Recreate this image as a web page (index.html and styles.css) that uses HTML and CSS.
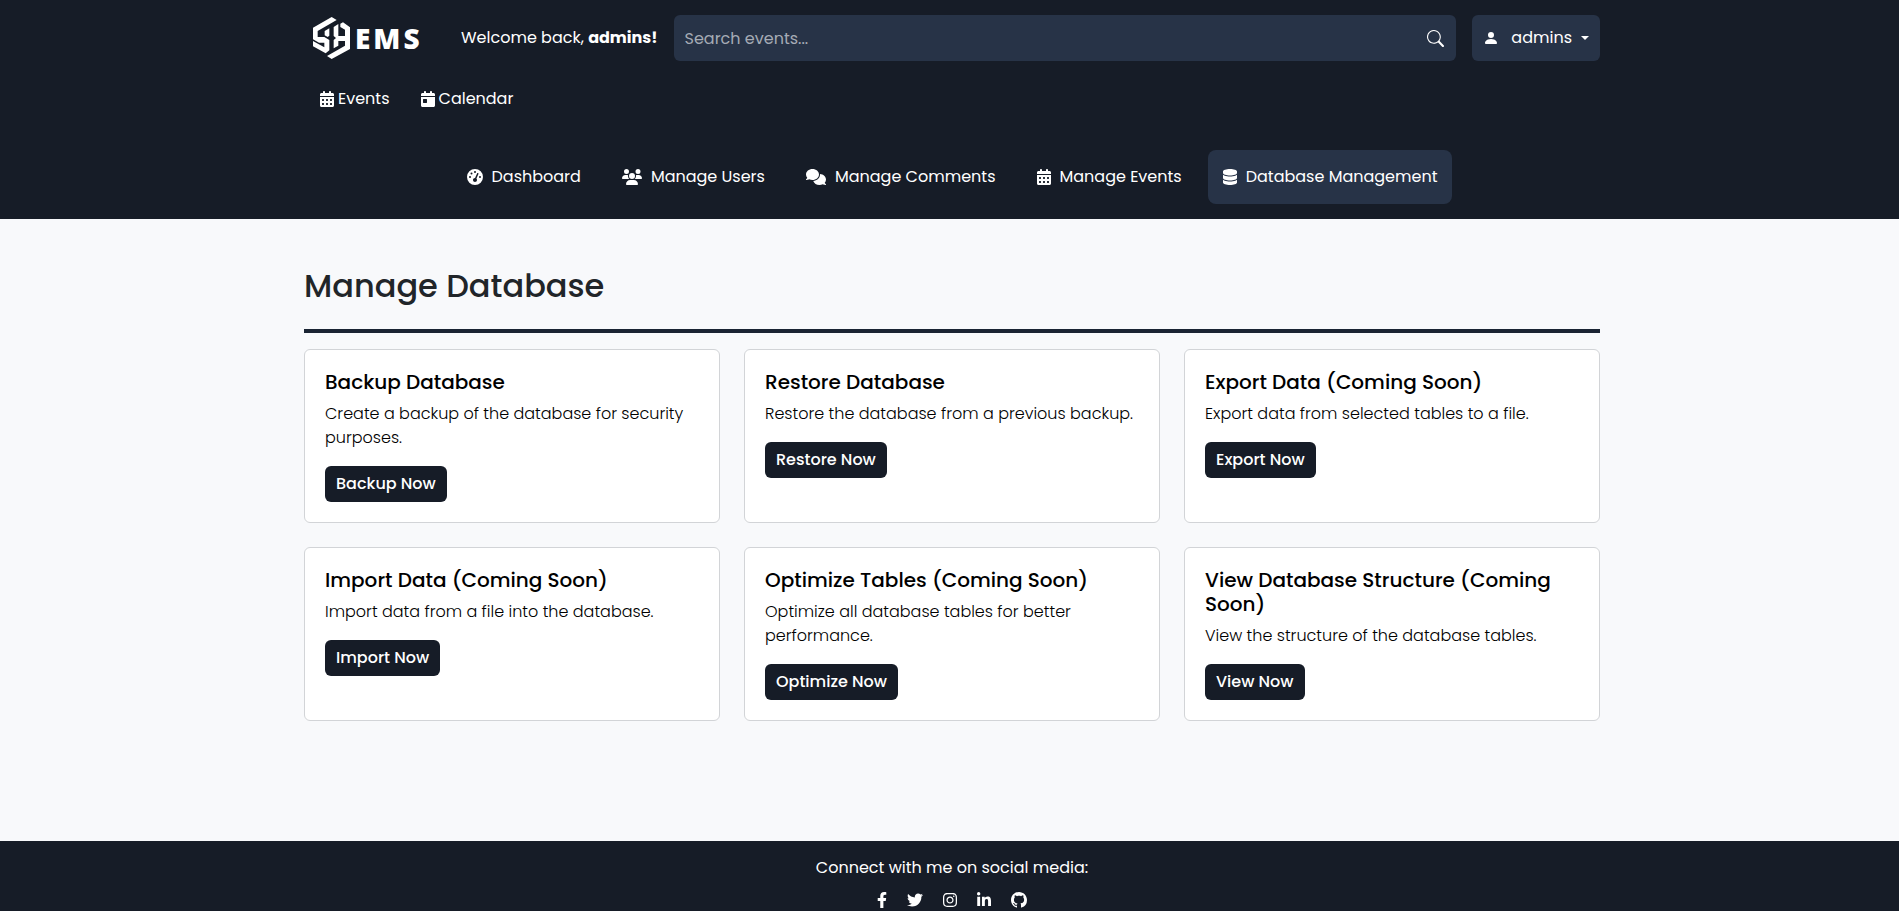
FILE: index.html
```html
<!DOCTYPE html>
<html lang="en">
<head>
<meta charset="utf-8">
<meta name="viewport" content="width=device-width, initial-scale=1">
<title>Manage Database</title>
<link rel="stylesheet" href="styles.css">
</head>
<body>
<svg class="sprite" aria-hidden="true">
  <symbol id="calendar-days" viewBox="0 0 448 512"><path d="M128 0c17.700 0 32 14.300 32 32V64H288V32c0-17.700 14.300-32 32-32s32 14.300 32 32V64h48c26.500 0 48 21.500 48 48v48H0V112C0 85.500 21.500 64 48 64H96V32c0-17.700 14.300-32 32-32zM0 192H448V464c0 26.500-21.500 48-48 48H48c-26.500 0-48-21.500-48-48V192zm64 80v32c0 8.800 7.200 16 16 16h32c8.800 0 16-7.200 16-16V272c0-8.800-7.200-16-16-16H80c-8.800 0-16 7.200-16 16zm128 0v32c0 8.800 7.200 16 16 16h32c8.800 0 16-7.200 16-16V272c0-8.800-7.200-16-16-16H208c-8.800 0-16 7.200-16 16zm144-16c-8.800 0-16 7.200-16 16v32c0 8.800 7.200 16 16 16h32c8.800 0 16-7.200 16-16V272c0-8.800-7.200-16-16-16H336zM64 400v32c0 8.800 7.200 16 16 16h32c8.800 0 16-7.200 16-16V400c0-8.800-7.200-16-16-16H80c-8.800 0-16 7.200-16 16zm144-16c-8.800 0-16 7.200-16 16v32c0 8.800 7.200 16 16 16h32c8.800 0 16-7.200 16-16V400c0-8.800-7.200-16-16-16H208zm112 16v32c0 8.800 7.200 16 16 16h32c8.800 0 16-7.200 16-16V400c0-8.800-7.200-16-16-16H336c-8.800 0-16 7.200-16 16z"/></symbol>
  <symbol id="calendar-day" viewBox="0 0 448 512"><path d="M128 0c17.700 0 32 14.300 32 32V64H288V32c0-17.700 14.300-32 32-32s32 14.300 32 32V64h48c26.500 0 48 21.500 48 48v48H0V112C0 85.500 21.500 64 48 64H96V32c0-17.700 14.300-32 32-32zM0 192H448V464c0 26.500-21.500 48-48 48H48c-26.500 0-48-21.500-48-48V192zm80 64c-8.800 0-16 7.200-16 16v96c0 8.800 7.200 16 16 16h96c8.800 0 16-7.200 16-16V272c0-8.800-7.200-16-16-16H80z"/></symbol>
  <symbol id="gauge" viewBox="0 0 512 512"><path d="M0 256a256 256 0 1 1 512 0A256 256 0 1 1 0 256zM288 96a32 32 0 1 0-64 0 32 32 0 1 0 64 0zM256 416c35.300 0 64-28.700 64-64c0-17.400-6.900-33.100-18.100-44.600L366 161.700c5.300-12.100-.2-26.300-12.300-31.600s-26.300 .2-31.600 12.300L257.900 288c-.6 0-1.300 0-1.900 0c-35.300 0-64 28.700-64 64s28.700 64 64 64zM176 144a32 32 0 1 0-64 0 32 32 0 1 0 64 0zM96 288a32 32 0 1 0 0-64 32 32 0 1 0 0 64zm352-32a32 32 0 1 0-64 0 32 32 0 1 0 64 0z"/></symbol>
  <symbol id="users" viewBox="0 0 640 512"><path d="M144 0a80 80 0 1 1 0 160A80 80 0 1 1 144 0zM512 0a80 80 0 1 1 0 160A80 80 0 1 1 512 0zM0 298.700C0 239.800 47.800 192 106.700 192h42.700c15.900 0 31 3.500 44.600 9.700c-1.300 7.200-1.900 14.700-1.900 22.300c0 38.200 16.800 72.500 43.300 96c-.2 0-.4 0-.7 0H21.300C9.600 320 0 310.400 0 298.700zM405.300 320c-.2 0-.4 0-.7 0c26.600-23.500 43.300-57.800 43.300-96c0-7.600-.7-15-1.900-22.300c13.600-6.300 28.700-9.700 44.600-9.700h42.700C592.200 192 640 239.800 640 298.700c0 11.800-9.600 21.300-21.300 21.300H405.300zM224 224a96 96 0 1 1 192 0 96 96 0 1 1-192 0zM128 485.300C128 411.700 187.700 352 261.300 352H378.700C452.300 352 512 411.700 512 485.300c0 14.700-11.900 26.700-26.700 26.700H154.700c-14.700 0-26.700-11.900-26.700-26.700z"/></symbol>
  <symbol id="comments" viewBox="0 0 640 512"><path d="M208 352c114.900 0 208-78.800 208-176S322.900 0 208 0S0 78.800 0 176c0 38.600 14.700 74.300 39.600 103.400c-3.500 9.400-8.700 17.700-14.200 24.700c-4.800 6.200-9.700 11-13.300 14.300c-1.800 1.600-3.300 2.900-4.300 3.700c-.5 .4-.9 .7-1.100 .8l-.2 .2C1 327.200-1.400 334.400 .8 340.900S9.100 352 16 352c21.800 0 43.800-5.600 62.100-12.500c9.200-3.500 17.800-7.400 25.200-11.400C134.100 343.300 169.800 352 208 352zM448 176c0 112.300-99.100 196.900-216.500 207C255.800 457.400 336.400 512 432 512c38.200 0 73.900-8.700 104.700-23.900c7.500 4 16 7.900 25.200 11.400c18.300 6.900 40.300 12.500 62.100 12.500c6.900 0 13.100-4.500 15.200-11.100c2.100-6.600-.2-13.800-5.800-17.900l-.2-.2c-.2-.2-.6-.4-1.100-.8c-1-.8-2.500-2-4.300-3.700c-3.600-3.300-8.500-8.100-13.300-14.300c-5.500-7-10.700-15.400-14.200-24.700c24.900-29 39.600-64.700 39.600-103.400c0-92.800-84.900-168.900-192.600-175.500c.4 5.100 .6 10.300 .6 15.500z"/></symbol>
  <symbol id="database" viewBox="0 0 448 512"><path d="M448 80v48c0 44.200-100.300 80-224 80S0 172.200 0 128V80C0 35.800 100.300 0 224 0S448 35.800 448 80zM393.200 214.700c20.800-7.400 39.900-16.900 54.800-28.600V288c0 44.200-100.300 80-224 80S0 332.200 0 288V186.100c14.900 11.800 34 21.200 54.800 28.600C99.700 230.700 159.500 240 224 240s124.300-9.300 169.200-25.300zM0 346.100c14.900 11.800 34 21.200 54.800 28.600C99.700 390.700 159.500 400 224 400s124.300-9.300 169.200-25.300c20.800-7.400 39.900-16.900 54.800-28.600V432c0 44.200-100.300 80-224 80S0 476.200 0 432V346.100z"/></symbol>
  <symbol id="search" viewBox="0 0 16 16"><path d="M11.742 10.344a6.500 6.500 0 1 0-1.397 1.398h-.001c.03.040.062.078.098.115l3.850 3.850a1 1 0 0 0 1.415-1.414l-3.850-3.850a1.007 1.007 0 0 0-.115-.1zM12 6.500a5.500 5.500 0 1 1-11 0 5.500 5.500 0 0 1 11 0z"/></symbol>
  <symbol id="person" viewBox="0 0 16 16"><path d="M3 14s-1 0-1-1 1-4 6-4 6 3 6 4-1 1-1 1H3zm5-6a3 3 0 1 0 0-6 3 3 0 0 0 0 6z"/></symbol>
  <symbol id="facebook" viewBox="0 0 320 512"><path d="M279.140 288l14.220-92.660h-88.910v-60.130c0-25.350 12.420-50.060 52.240-50.060h40.420V6.260S260.430 0 225.360 0c-73.220 0-121.080 44.380-121.080 124.720v70.620H22.890V288h81.390v224h100.170V288z"/></symbol>
  <symbol id="twitter" viewBox="0 0 512 512"><path d="M459.370 151.716c.325 4.548.325 9.097.325 13.645 0 138.720-105.583 298.558-298.558 298.558-59.452 0-114.680-17.219-161.137-47.106 8.447.974 16.568 1.299 25.340 1.299 49.055 0 94.213-16.568 130.274-44.832-46.132-.975-84.792-31.188-98.112-72.772 6.498.974 12.995 1.624 19.818 1.624 9.421 0 18.843-1.300 27.614-3.573-48.081-9.747-84.143-51.980-84.143-102.985v-1.299c13.969 7.797 30.214 12.670 47.431 13.319-28.264-18.843-46.781-51.005-46.781-87.391 0-19.492 5.197-37.360 14.294-52.954 51.655 63.675 129.300 105.258 216.365 109.807-1.624-7.797-2.599-15.918-2.599-24.040 0-57.828 46.782-104.934 104.934-104.934 30.213 0 57.502 12.670 76.670 33.137 23.715-4.548 46.456-13.320 66.599-25.340-7.798 24.366-24.366 44.833-46.132 57.827 21.117-2.273 41.584-8.122 60.426-16.243-14.292 20.791-32.161 39.308-52.628 54.253z"/></symbol>
  <symbol id="instagram" viewBox="0 0 448 512"><path d="M224.100 141c-63.600 0-114.900 51.300-114.900 114.900s51.300 114.900 114.900 114.900S339 319.500 339 255.900 287.700 141 224.100 141zm0 189.600c-41.100 0-74.700-33.500-74.700-74.700s33.500-74.700 74.700-74.700 74.700 33.500 74.700 74.700-33.600 74.700-74.700 74.700zm146.400-194.300c0 14.900-12 26.800-26.800 26.800-14.900 0-26.800-12-26.800-26.800s12-26.800 26.800-26.800 26.800 12 26.800 26.800zm76.100 27.200c-1.700-35.900-9.900-67.700-36.200-93.900-26.200-26.200-58-34.400-93.900-36.200-37-2.100-147.900-2.100-184.900 0-35.800 1.700-67.600 9.900-93.900 36.100s-34.400 58-36.200 93.900c-2.100 37-2.100 147.900 0 184.900 1.700 35.900 9.900 67.700 36.200 93.900s58 34.400 93.900 36.200c37 2.100 147.900 2.100 184.900 0 35.900-1.700 67.700-9.900 93.900-36.200 26.200-26.200 34.400-58 36.200-93.900 2.100-37 2.100-147.800 0-184.800zM398.800 388c-7.800 19.600-22.900 34.700-42.600 42.600-29.500 11.700-99.500 9-132.100 9s-102.700 2.600-132.100-9c-19.600-7.800-34.700-22.900-42.600-42.600-11.700-29.500-9-99.500-9-132.100s-2.600-102.700 9-132.100c7.800-19.600 22.900-34.700 42.600-42.600 29.500-11.700 99.500-9 132.100-9s102.700-2.600 132.100 9c19.600 7.800 34.700 22.900 42.600 42.600 11.700 29.500 9 99.500 9 132.100s2.700 102.700-9 132.100z"/></symbol>
  <symbol id="linkedin" viewBox="0 0 448 512"><path d="M100.280 448H7.400V148.900h92.880zM53.790 108.100C24.090 108.100 0 83.500 0 53.800a53.790 53.790 0 0 1 107.580 0c0 29.700-24.100 54.300-53.790 54.300zM447.900 448h-92.680V302.400c0-34.700-.7-79.200-48.290-79.200-48.290 0-55.690 37.700-55.690 76.700V448h-92.780V148.900h89.080v40.800h1.300c12.400-23.500 42.690-48.300 87.880-48.300 94 0 111.280 61.900 111.280 142.300V448z"/></symbol>
  <symbol id="github" viewBox="0 0 16 16"><path d="M8 0C3.580 0 0 3.580 0 8c0 3.540 2.290 6.530 5.470 7.590.4.070.55-.17.55-.38 0-.19-.01-.82-.01-1.490-2.010.37-2.530-.49-2.690-.94-.09-.23-.48-.94-.82-1.130-.28-.15-.68-.52-.01-.53.63-.01 1.080.58 1.230.82.72 1.210 1.870.87 2.330.66.070-.52.280-.87.510-1.070-1.780-.2-3.640-.89-3.640-3.950 0-.87.310-1.590.82-2.150-.08-.2-.36-1.020.08-2.120 0 0 .67-.21 2.200.82.640-.18 1.320-.27 2-.27s1.360.09 2 .27c1.530-1.040 2.200-.82 2.200-.82.440 1.100.160 1.920.080 2.120.51.560.82 1.270.82 2.150 0 3.070-1.870 3.750-3.650 3.950.29.250.54.730.54 1.480 0 1.070-.01 1.930-.01 2.200 0 .21.150.46.550.38A8.010 8.010 0 0 0 16 8c0-4.420-3.580-8-8-8z"/></symbol>
</svg>

<header class="header">
  <div class="container">
    <div class="topbar">
      <a class="brand" href="#" aria-label="EMS home">
        <svg class="brand-mark" viewBox="0 0 111 126" aria-hidden="true">
          <path d="M56 0 71 9 14 42V60H34L49 69V100L38 109 0 88V72L34 91V77H18L0 67V32z"/>
          <path d="M35 42 49 34V56L44 60 35 55z"/>
          <path d="M62 30 76 21V57H96V38L82 30V20L90 16 111 31V96L56 126 42 117 96 86V72H76V86L62 94V69L69 63 62 57z"/>
        </svg>
        <span class="brand-name">EMS</span>
      </a>
      <p class="welcome">Welcome back, <strong>admins!</strong></p>
      <form class="search" role="search">
        <input class="search-input" type="search" placeholder="Search events..." aria-label="Search events">
        <button class="search-button" type="button" aria-label="Search"><svg class="icon"><use href="#search"/></svg></button>
      </form>
      <button class="account" type="button" aria-haspopup="menu">
        <svg class="icon"><use href="#person"/></svg><span class="account-name">admins</span><span class="caret"></span>
      </button>
    </div>
    <nav class="links" aria-label="Main">
      <a class="link" href="#"><svg class="icon narrow"><use href="#calendar-days"/></svg>Events</a>
      <a class="link" href="#"><svg class="icon narrow"><use href="#calendar-day"/></svg>Calendar</a>
    </nav>
    <nav class="tabs" aria-label="Administration">
      <a class="tab" href="#"><svg class="icon"><use href="#gauge"/></svg>Dashboard</a>
      <a class="tab" href="#"><svg class="icon wide"><use href="#users"/></svg>Manage Users</a>
      <a class="tab" href="#"><svg class="icon wide"><use href="#comments"/></svg>Manage Comments</a>
      <a class="tab" href="#"><svg class="icon narrow"><use href="#calendar-days"/></svg>Manage Events</a>
      <a class="tab active" href="#" aria-current="page"><svg class="icon narrow"><use href="#database"/></svg>Database Management</a>
    </nav>
  </div>
</header>

<main class="main">
  <div class="container">
    <h1 class="title">Manage Database</h1>
    <div class="cards">
      <section class="card">
        <h2 class="card-title">Backup Database</h2>
        <p class="card-text">Create a backup of the database for security purposes.</p>
        <button class="button" type="button">Backup Now</button>
      </section>
      <section class="card">
        <h2 class="card-title">Restore Database</h2>
        <p class="card-text">Restore the database from a previous backup.</p>
        <button class="button" type="button">Restore Now</button>
      </section>
      <section class="card">
        <h2 class="card-title">Export Data (Coming Soon)</h2>
        <p class="card-text">Export data from selected tables to a file.</p>
        <button class="button" type="button">Export Now</button>
      </section>
      <section class="card">
        <h2 class="card-title">Import Data (Coming Soon)</h2>
        <p class="card-text">Import data from a file into the database.</p>
        <button class="button" type="button">Import Now</button>
      </section>
      <section class="card">
        <h2 class="card-title">Optimize Tables (Coming Soon)</h2>
        <p class="card-text">Optimize all database tables for better performance.</p>
        <button class="button" type="button">Optimize Now</button>
      </section>
      <section class="card">
        <h2 class="card-title">View Database Structure (Coming Soon)</h2>
        <p class="card-text">View the structure of the database tables.</p>
        <button class="button" type="button">View Now</button>
      </section>
    </div>
  </div>
</main>

<footer class="footer">
  <div class="container">
    <p class="footer-text">Connect with me on social media:</p>
    <div class="social">
      <a href="#" aria-label="Facebook"><svg class="icon slim"><use href="#facebook"/></svg></a>
      <a href="#" aria-label="Twitter"><svg class="icon"><use href="#twitter"/></svg></a>
      <a href="#" aria-label="Instagram"><svg class="icon narrow"><use href="#instagram"/></svg></a>
      <a href="#" aria-label="LinkedIn"><svg class="icon narrow"><use href="#linkedin"/></svg></a>
      <a href="#" aria-label="GitHub"><svg class="icon"><use href="#github"/></svg></a>
    </div>
  </div>
</footer>
</body>
</html>
```
FILE: styles.css
```css
:root {
  --dark: #161c27;
  --panel: #273347;
  --page: #f8f9fb;
}

* { box-sizing: border-box; }

body {
  margin: 0;
  min-height: 100vh;
  display: flex;
  flex-direction: column;
  background: var(--page);
  color: #212529;
  font: 400 16px/24px Poppins, Inter, sans-serif;
}

h1, h2, p { margin: 0; }
a { color: inherit; text-decoration: none; }
button, input { font: inherit; color: inherit; border: 0; }
button { cursor: pointer; }

.sprite { display: none; }
.container {
  width: 100%;
  max-width: 1325px;
  margin: 0 auto;
  padding: 0 12px 0 17px;
}
.icon {
  flex: none;
  width: 16px;
  height: 16px;
  fill: currentColor;
}
.icon.slim { width: 10px; }
.icon.narrow { width: 14px; }
.icon.wide { width: 20px; }

.header {
  background: var(--dark);
  color: #fff;
  padding: 15px 0;
}
.topbar {
  display: flex;
  align-items: center;
  gap: 16px;
}
.brand {
  display: flex;
  align-items: center;
  gap: 5px;
  width: 141px;
  padding-left: 9px;
}
.brand-mark {
  width: 37px;
  height: 42px;
  fill: #fff;
}
.brand-name {
  font: 800 28px/40px "Open Sans", sans-serif;
  letter-spacing: 3px;
}
.welcome { white-space: nowrap; }
.search {
  flex: 1;
  display: flex;
  background: var(--panel);
  border-radius: 6px;
}
.search-input {
  flex: 1;
  min-width: 0;
  height: 46px;
  padding: 0 11px;
  background: none;
  outline: 0;
}
.search-input::placeholder { color: #a5abb5; opacity: 1; }
.search-button {
  display: flex;
  align-items: center;
  padding: 0 12px;
  background: none;
}
.search-button .icon {
  width: 17px;
  height: 17px;
}
.account {
  display: flex;
  align-items: center;
  height: 46px;
  padding: 0 11px;
  background: var(--panel);
  border-radius: 6px;
}
.account-name { margin: 0 9px 0 12px; }
.caret {
  border: 4px solid transparent;
  border-top-color: currentColor;
  border-bottom: 0;
}

.links {
  display: flex;
  gap: 31px;
  padding: 26px 16px 24px;
}
.link {
  display: flex;
  align-items: center;
  gap: 4px;
}
.tabs {
  display: flex;
  flex-wrap: wrap;
  justify-content: center;
  gap: 11px;
  padding-top: 15px;
}
.tab {
  display: flex;
  align-items: center;
  gap: 9px;
  padding: 15px;
  border-radius: 8px;
}
.tab.active { background: var(--panel); }

.main {
  flex: 1;
  padding: 48px 0 120px;
}
.title {
  padding-bottom: 24px;
  border-bottom: 4px solid #1a2433;
  font-size: 32px;
  line-height: 38px;
  font-weight: 500;
}
.cards {
  display: grid;
  grid-template-columns: repeat(3, 1fr);
  gap: 24px;
  padding-top: 16px;
}
.card {
  padding: 20px;
  background: #fff;
  border: 1px solid #d2d4d7;
  border-radius: 6px;
  color: #000;
}
.card-title {
  margin-bottom: 8px;
  font-size: 20px;
  line-height: 24px;
  font-weight: 500;
}
.card-text {
  margin-bottom: 16px;
  font-weight: 300;
}
.button {
  height: 36px;
  padding: 0 11px;
  background: var(--dark);
  border-radius: 6px;
  color: #fff;
  font-weight: 500;
}

.footer {
  background: var(--dark);
  color: #fff;
  padding: 15px 0 3px;
}
.footer-text { text-align: center; }
.social {
  display: flex;
  justify-content: center;
  gap: 20px;
  padding-top: 12px;
}
.social a { display: flex; }
```
